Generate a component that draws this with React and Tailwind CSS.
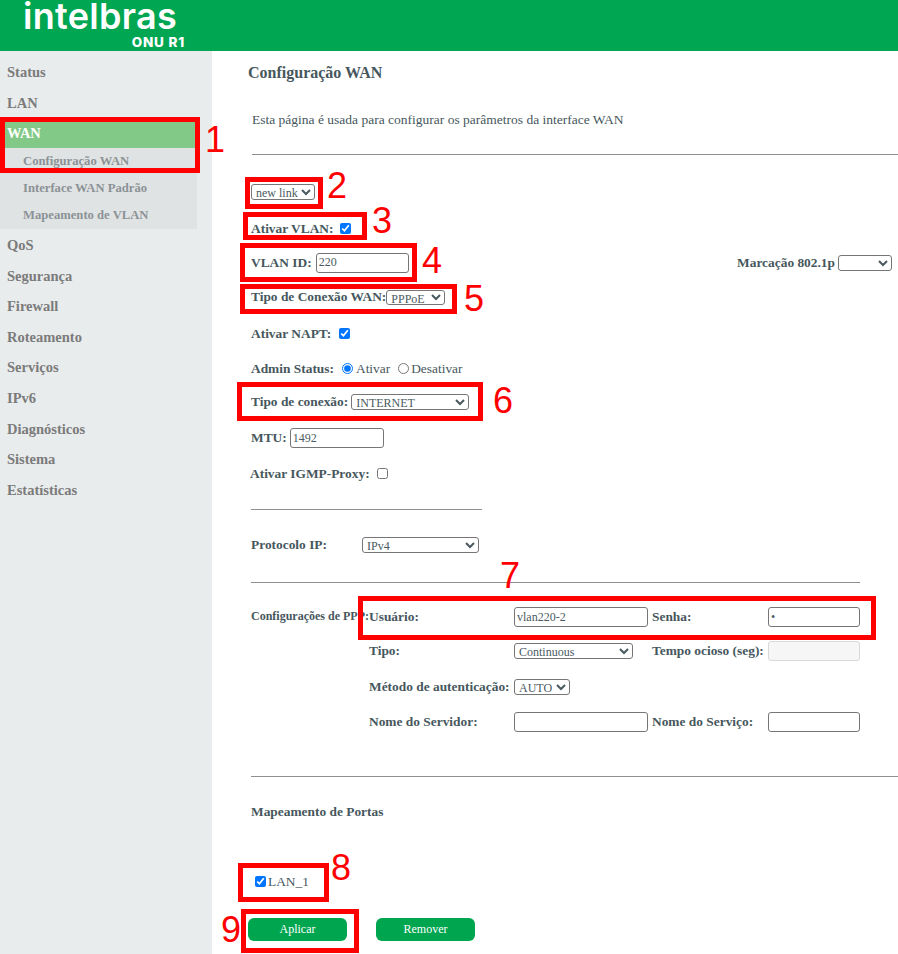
const serif = "font-['Liberation_Serif',serif]";

const MENU_TOP = ['Status', 'LAN'];
const MENU_SUB = ['Configuração WAN', 'Interface WAN Padrão', 'Mapeamento de VLAN'];
const MENU_BOTTOM = ['QoS', 'Segurança', 'Firewall', 'Roteamento', 'Serviços', 'IPv6', 'Diagnósticos', 'Sistema', 'Estatísticas'];

const fieldCls = 'bg-white border border-[#767676] rounded-[3px] text-[12px] text-[#4a5a60] outline-none';

function MenuItem({ label }) {
  return (
    <div className="h-[30.6px] flex items-center pl-[7px] text-[14.5px] font-bold text-[#7b7b7b]">{label}</div>
  );
}

function Sidebar() {
  return (
    <aside className="w-[212px] shrink-0 bg-[#e9eced] pt-[7px]">
      {MENU_TOP.map((m) => <MenuItem key={m} label={m} />)}
      <div className="w-[195px] ml-[5px] mt-[1px] h-[28px] bg-[#82c987] flex items-center pl-[2px] text-[14.5px] font-bold text-white">WAN</div>
      <div className="w-[197px] bg-[#e0e3e4] h-[81px]">
        {MENU_SUB.map((m) => (
          <div key={m} className="h-[27px] flex items-center pl-[23px] text-[12.65px] font-bold text-[#8b9296]">{m}</div>
        ))}
      </div>
      <div className="h-[1.5px]" />
      {MENU_BOTTOM.map((m) => <MenuItem key={m} label={m} />)}
    </aside>
  );
}

function Row({ h, className = '', children }) {
  return <div className={`flex items-center ${h} ${className}`}>{children}</div>;
}

function Label({ children, className = '' }) {
  return <span className={`font-bold text-[13.4px] whitespace-pre ${className}`}>{children}</span>;
}

function Divider({ w, mt, mb }) {
  return <div className={`h-px bg-[#8f8f8f] ${w} ${mt} ${mb}`} />;
}

function PppRow({ h, label, field, label2, field2 }) {
  return (
    <div className={`grid grid-cols-[145px_138px_116px_92px] items-center ${h}`}>
      <Label>{label}</Label>
      <div className="flex items-center">{field}</div>
      <Label>{label2}</Label>
      <div className="flex items-center">{field2}</div>
    </div>
  );
}

function Content() {
  return (
    <main className="flex-1 min-w-0 text-[#46575d] text-[13.4px] overflow-hidden">
      <h1 className="ml-[36px] mt-[12px] h-[19px] leading-[19px] text-[16px] font-bold">Configuração WAN</h1>
      <p className="ml-[40px] mt-[30px] h-[16px] leading-[16px] text-[13.5px]">Esta página é usada para configurar os parâmetros da interface WAN</p>
      <Divider w="w-[646px] ml-[40px]" mt="mt-[26px]" />

      <div className="ml-[39px]">
        <Row h="h-[18px] mt-[28px]">
          <select defaultValue="new link" className={`${fieldCls} h-[16px]`}>
            <option>new link</option>
          </select>
        </Row>
        <Row h="h-[20px] mt-[18px]">
          <Label>Ativar VLAN:</Label>
          <input type="checkbox" defaultChecked className="ml-[7px] -mt-[2px] w-[11px] h-[11px]" />
        </Row>
        <div className="flex items-center justify-between h-[22px] mt-[13px] mr-[6px]">
          <div className="flex items-center">
            <Label>VLAN ID:</Label>
            <input defaultValue="220" className={`${fieldCls} ml-[4px] w-[93px] h-[20px] px-[2px]`} />
          </div>
          <div className="flex items-center">
            <Label>Marcação 802.1p</Label>
            <select className={`${fieldCls} ml-[3px] w-[54px] h-[16px]`}><option></option></select>
          </div>
        </div>
        <Row h="h-[18px] mt-[14px]">
          <Label>Tipo de Conexão WAN:</Label>
          <select defaultValue="PPPoE" className={`${fieldCls} w-[59px] h-[15px]`}>
            <option>PPPoE</option>
            <option>Bridged</option>
          </select>
        </Row>
        <Row h="h-[18px] mt-[19px]">
          <Label>Ativar NAPT:</Label>
          <input type="checkbox" defaultChecked className="ml-[8px] -mt-[2px] w-[11px] h-[11px]" />
        </Row>
        <Row h="h-[18px] mt-[17px]">
          <Label>Admin Status:</Label>
          <input type="radio" name="admin" defaultChecked className="ml-[8px] -mt-[1px] w-[11px] h-[11px]" />
          <span className="ml-[3px]">Ativar</span>
          <input type="radio" name="admin" className="ml-[8px] -mt-[1px] w-[11px] h-[11px]" />
          <span className="ml-[2px]">Desativar</span>
        </Row>
        <Row h="h-[18px] mt-[15px]">
          <Label>Tipo de conexão:</Label>
          <select defaultValue="INTERNET" className={`${fieldCls} ml-[3px] w-[118px] h-[16px]`}><option>INTERNET</option></select>
        </Row>
        <Row h="h-[20px] mt-[17px]">
          <Label>MTU:</Label>
          <input defaultValue="1492" className={`${fieldCls} ml-[3px] w-[94px] h-[20px] px-[2px]`} />
        </Row>
        <Row h="h-[18px] mt-[17px] -ml-[1px]">
          <Label>Ativar IGMP-Proxy:</Label>
          <input type="checkbox" className="ml-[7px] -mt-[2px] w-[11px] h-[11px]" />
        </Row>
      </div>

      <Divider w="w-[231px] ml-[39px]" mt="mt-[26px]" />
      <Row h="h-[18px] mt-[26px] ml-[39px]">
        <Label className="w-[111px]">Protocolo IP:</Label>
        <select defaultValue="IPv4" className={`${fieldCls} w-[117px] h-[16px]`}><option>IPv4</option></select>
      </Row>
      <Divider w="w-[609px] ml-[39px]" mt="mt-[28px]" />

      <div className="ml-[39px] mt-[24px] flex">
        <div className="w-[118px] shrink-0 text-[12px] font-bold whitespace-nowrap h-[20px] leading-[20px] -mt-[1px]">Configurações de PPP:</div>
        <div>
          <PppRow h="h-[20px]" label="Usuário:"
            field={<input defaultValue="vlan220-2" className={`${fieldCls} w-[134px] h-[20px] px-[2px]`} />}
            label2="Senha:"
            field2={<input type="password" defaultValue="a" className={`${fieldCls} w-[92px] h-[20px] px-[2px]`} />} />
          <PppRow h="h-[20px] mt-[14px]" label="Tipo:"
            field={<select defaultValue="Continuous" className={`${fieldCls} w-[119px] h-[16px]`}><option>Continuous</option></select>}
            label2="Tempo ocioso (seg):"
            field2={<input disabled className="w-[92px] h-[20px] bg-[#f6f6f6] border border-[#d9d9d9] rounded-[3px]" />} />
          <PppRow h="h-[20px] mt-[16px]" label="Método de autenticação:"
            field={<select defaultValue="AUTO" className={`${fieldCls} h-[16px]`}><option>AUTO</option></select>} />
          <PppRow h="h-[20px] mt-[15px]" label="Nome do Servidor:"
            field={<input className={`${fieldCls} w-[134px] h-[20px]`} />}
            label2="Nome do Serviço:"
            field2={<input className={`${fieldCls} w-[92px] h-[20px]`} />} />
        </div>
      </div>

      <Divider w="w-[647px] ml-[39px]" mt="mt-[44px]" />
      <Row h="h-[18px] mt-[26px] ml-[39px]"><Label>Mapeamento de Portas</Label></Row>
      <Row h="h-[18px] mt-[52px] ml-[43px]">
        <input type="checkbox" defaultChecked className="w-[11px] h-[11px] -mt-[2px]" />
        <span className="ml-[2px]">LAN_1</span>
      </Row>
      <div className="flex ml-[36px] mt-[27px] gap-[29px]">
        <button className="w-[99px] h-[23px] pb-[1px] rounded-[6px] bg-[#00a54f] text-white text-[12px]">Aplicar</button>
        <button className="w-[99px] h-[23px] pb-[1px] rounded-[6px] bg-[#00a54f] text-white text-[12px]">Remover</button>
      </div>
    </main>
  );
}

function Note({ box, num, numPos }) {
  return (
    <>
      <div className={`absolute border-[5px] border-[#ff0000] ${box}`} />
      <span className={`absolute font-['Liberation_Sans',sans-serif] text-[36px] leading-[36px] text-[#ff0000] ${numPos}`}>{num}</span>
    </>
  );
}

export default function App() {
  return (
    <div className={`relative w-[898px] h-[954px] overflow-hidden bg-white flex flex-col ${serif}`}>
      <header className="h-[51px] shrink-0 bg-[#00a651] pl-[23px] pt-[0px] text-white font-['Inter',sans-serif]">
        <div className="w-[162px] flex flex-col items-end">
          <div className="w-full text-[36px] h-[33px] leading-[33px] font-semibold tracking-[0.3px] whitespace-nowrap">intelbras</div>
          <div className="text-[13.5px] h-[18px] leading-[18px] font-extrabold tracking-[0.8px]">ONU R1</div>
        </div>
      </header>
      <div className="flex flex-1 min-h-0">
        <Sidebar />
        <Content />
      </div>

      <Note box="left-[0px] top-[117px] w-[200px] h-[56px]" num="1" numPos="left-[205px] top-[122px]" />
      <Note box="left-[245px] top-[177px] w-[78px] h-[32px]" num="2" numPos="left-[327px] top-[168px]" />
      <Note box="left-[243px] top-[212px] w-[124px] h-[28px]" num="3" numPos="left-[372px] top-[203px]" />
      <Note box="left-[240px] top-[243px] w-[177px] h-[39px]" num="4" numPos="left-[422px] top-[243px]" />
      <Note box="left-[240px] top-[284px] w-[217px] h-[30px]" num="5" numPos="left-[464px] top-[281px]" />
      <Note box="left-[237px] top-[382px] w-[246px] h-[39px]" num="6" numPos="left-[493px] top-[383px]" />
      <Note box="left-[358px] top-[596px] w-[518px] h-[44px]" num="7" numPos="left-[500px] top-[558px]" />
      <Note box="left-[238px] top-[863px] w-[91px] h-[39px]" num="8" numPos="left-[331px] top-[850px]" />
      <Note box="left-[241px] top-[909px] w-[118px] h-[44px]" num="9" numPos="left-[221px] top-[912px]" />
    </div>
  );
}
